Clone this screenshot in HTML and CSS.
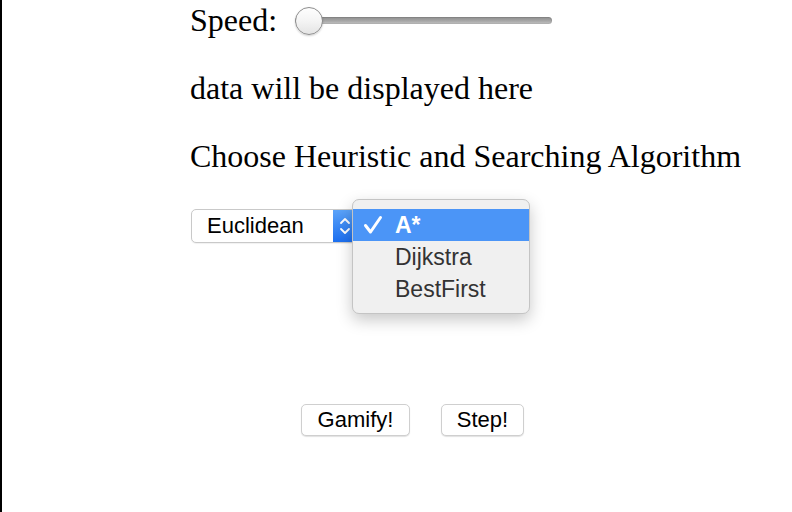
FILE: index.html
```html
<!DOCTYPE html>
<html>
<head>
<meta charset="utf-8">
<link rel="stylesheet" href="styles.css">
</head>
<body>
<div class="page">
  <p class="line speed"><span>Speed:</span><input class="range" type="range" min="0" max="100" value="0"></p>
  <p class="line">data will be displayed here</p>
  <p class="line">Choose Heuristic and Searching Algorithm</p>
  <div class="controls">
    <div class="select">
      <span class="select-value">Euclidean</span>
      <span class="select-arrows">
        <svg width="12" height="20" viewBox="0 0 12 20"><path d="M2 7 L6 3 L10 7 M2 13 L6 17 L10 13" fill="none" stroke="#fff" stroke-width="1.8" stroke-linecap="round" stroke-linejoin="round"/></svg>
      </span>
    </div>
    <div class="menu">
      <div class="item active">
        <svg class="check" width="20" height="20" viewBox="0 0 20 20"><path d="M2.5 10.5 L7.5 17 L17.5 2.5" fill="none" stroke="#fff" stroke-width="3" stroke-linejoin="round" stroke-linecap="round"/></svg>
        <span>A*</span>
      </div>
      <div class="item"><span>Dijkstra</span></div>
      <div class="item"><span>BestFirst</span></div>
    </div>
  </div>
  <div class="buttons">
    <button class="btn gamify">Gamify!</button>
    <button class="btn step">Step!</button>
  </div>
</div>
</body>
</html>
```
FILE: styles.css
```css
html, body {
  margin: 0;
  padding: 0;
  background: #fff;
}
.page {
  box-sizing: border-box;
  min-height: 100vh;
  border-left: 2px solid #000;
  padding-left: 188px;
  padding-top: 2px;
  font-family: "Liberation Serif", "Times New Roman", serif;
  font-size: 32px;
  color: #000;
}
.line {
  margin: 0 0 31px 0;
  line-height: 37px;
  height: 37px;
  white-space: nowrap;
}
.speed {
  display: flex;
  align-items: center;
}
.range {
  -webkit-appearance: none;
  appearance: none;
  margin: 0 0 0 18px;
  width: 257px;
  height: 32px;
  background: transparent;
  padding: 0;
}
.range::-webkit-slider-runnable-track {
  height: 7px;
  border-radius: 4px;
  background: linear-gradient(#8c8c8c, #a9a9a9 60%, #c4c4c4);
  box-shadow: inset 0 0 0 1px rgba(0,0,0,0.08);
}
.range::-webkit-slider-thumb {
  -webkit-appearance: none;
  width: 28px;
  height: 28px;
  border-radius: 50%;
  margin-top: -10.5px;
  background: linear-gradient(#fefefe, #f4f4f4 50%, #e4e4e4);
  border: 1.5px solid #8e8e8e;
  box-sizing: border-box;
  box-shadow: 0 1px 2px rgba(0,0,0,0.18);
}
.controls {
  position: relative;
  margin-top: 34px;
  height: 34px;
  font-family: "Liberation Sans", Arial, sans-serif;
  font-size: 22px;
}
.select {
  box-sizing: border-box;
  margin-left: 1px;
  width: 170px;
  height: 34px;
  border: 1px solid #c9c9c9;
  border-radius: 5px;
  background: #fff;
  display: flex;
  align-items: center;
  overflow: hidden;
  box-shadow: 0 1px 1px rgba(0,0,0,0.06);
}
.select-value {
  flex: 1;
  padding-left: 15px;
}
.select-arrows {
  width: 27px;
  align-self: stretch;
  background: linear-gradient(#5ba3f9, #1c6ff0);
  display: flex;
  align-items: center;
  padding-left: 6px;
  box-sizing: border-box;
}
.menu {
  position: absolute;
  left: 162px;
  top: -10px;
  width: 178px;
  box-sizing: border-box;
  padding: 9px 0 8px;
  background: #f0f0f0;
  border: 1px solid #c4c4c4;
  border-radius: 7px;
  box-shadow: 0 6px 16px rgba(0,0,0,0.22);
  font-size: 23px;
}
.item {
  height: 32px;
  display: flex;
  align-items: center;
  padding-left: 42px;
  position: relative;
  color: #333;
}
.item.active {
  background: #4b95f7;
  color: #fff;
  font-weight: bold;
}
.check {
  position: absolute;
  left: 10px;
  top: 6px;
}
.buttons {
  display: flex;
  gap: 31px;
  margin-left: 111px;
  margin-top: 161px;
}
.btn {
  box-sizing: border-box;
  height: 32px;
  padding: 0;
  font-family: "Liberation Sans", Arial, sans-serif;
  font-size: 22px;
  color: #000;
  background: #fff;
  border: 1px solid #cfcfcf;
  border-radius: 5px;
  box-shadow: 0 1px 1px rgba(0,0,0,0.12);
}
.gamify { width: 109px; }
.step { width: 83px; }
```
